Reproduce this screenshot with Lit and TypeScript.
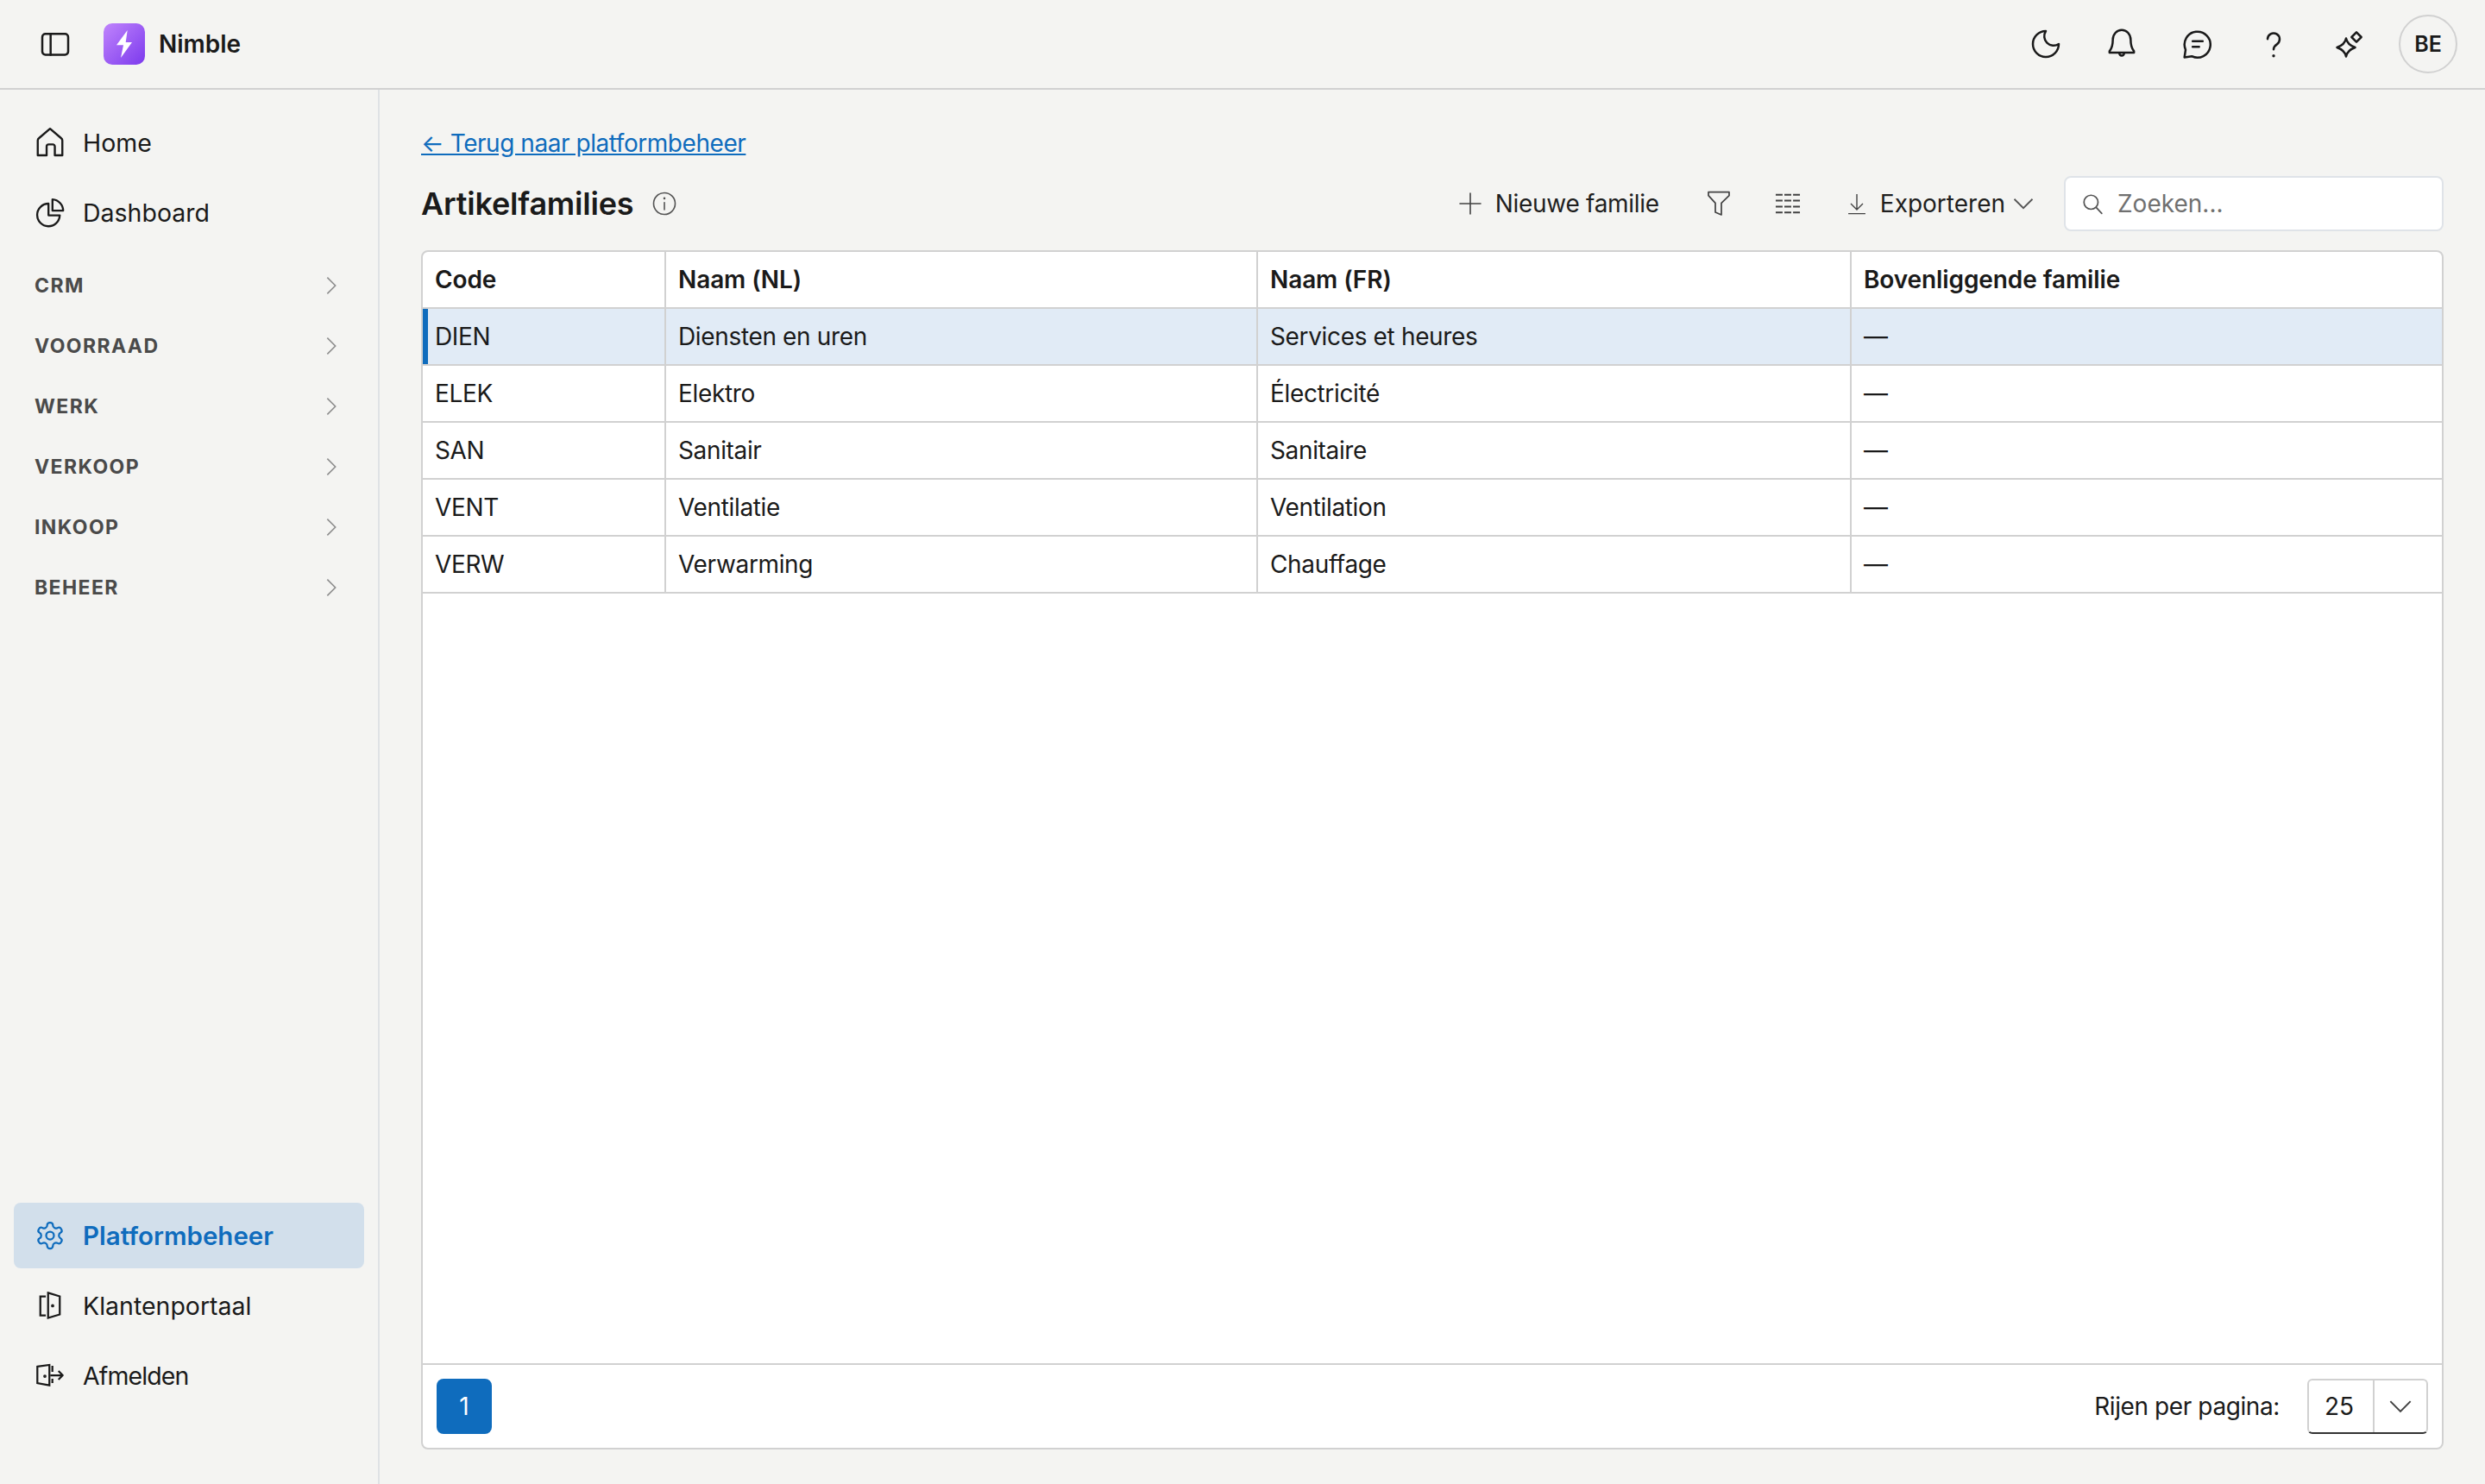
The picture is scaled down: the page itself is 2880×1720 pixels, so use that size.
import { LitElement, html, svg, css } from "lit";
import { customElement } from "lit/decorators.js";

const ic = (size: number, sw: number, body: unknown) => html`<svg class="ic" style="width:${size}px;height:${size}px" viewBox="0 0 24 24" fill="none" stroke="currentColor" stroke-width="${sw}" stroke-linecap="round" stroke-linejoin="round">${body}</svg>`;

const chevron = (cls: string) => html`<svg class=${cls} viewBox="0 0 24 24" fill="none" stroke="currentColor" stroke-width="1.2"><path d="M5 8.5l7 7 7-7"/></svg>`;

const icons = {
  panel: svg`<rect x="3" y="5" width="18" height="14.5" rx="2.2"/><path d="M8.8 5v14.5"/>`,
  home: svg`<path d="M3 21.500V10.600c0-.6.3-1.200.8-1.600L12 2l8.200 7c.5.4.8 1 .8 1.600v10.900h-5.500v-6.500a1.500 1.500 0 0 0-1.500-1.500h-3a1.500 1.500 0 0 0-1.500 1.500v6.500z"/>`,
  pie: svg`<path d="M10.500 5.200A8.500 8.500 0 1 0 19 14h-8.500z"/><path d="M13.500 2a8.500 8.500 0 0 1 8 8.500h-8z"/>`,
  gear: svg`<path d="M12.220 2h-.44a2 2 0 0 0-2 2v.18a2 2 0 0 1-1 1.730l-.43.25a2 2 0 0 1-2 0l-.15-.08a2 2 0 0 0-2.730.73l-.22.38a2 2 0 0 0 .73 2.730l.15.1a2 2 0 0 1 1 1.720v.51a2 2 0 0 1-1 1.740l-.15.09a2 2 0 0 0-.73 2.730l.22.38a2 2 0 0 0 2.730.73l.15-.08a2 2 0 0 1 2 0l.43.25a2 2 0 0 1 1 1.730V20a2 2 0 0 0 2 2h.44a2 2 0 0 0 2-2v-.18a2 2 0 0 1 1-1.730l.43-.25a2 2 0 0 1 2 0l.15.08a2 2 0 0 0 2.730-.73l.22-.39a2 2 0 0 0-.73-2.730l-.15-.08a2 2 0 0 1-1-1.740v-.5a2 2 0 0 1 1-1.740l.15-.09a2 2 0 0 0 .73-2.730l-.22-.38a2 2 0 0 0-2.730-.73l-.15.08a2 2 0 0 1-2 0l-.43-.25a2 2 0 0 1-1-1.730V4a2 2 0 0 0-2-2z"/><circle cx="12" cy="12" r="3"/>`,
  door: svg`<path d="M8.700 5H4.500v14.700h4.200" stroke-linecap="butt" stroke-linejoin="miter"/><path d="M10.500 2.300l9 2.700v14l-9 2.700z" stroke-linejoin="miter"/><circle cx="14" cy="12.300" r=".5" fill="currentColor"/>`,
  logout: svg`<path d="M2.200 5.300L11.500 4v15.700L2.200 18z" stroke-linejoin="miter"/><path d="M13.800 4.700v4.600M13.800 14.700V18" stroke-linecap="butt"/><path d="M12.200 12h9.600M18.500 8.700l3.300 3.300-3.300 3.300" stroke-linecap="butt"/><circle cx="8" cy="12.700" r=".5" fill="currentColor"/>`,
  moon: svg`<path d="M12 3a6.500 6.500 0 0 0 9 9 9 9 0 1 1-9-9Z"/>`,
  bell: svg`<path d="M5.800 9a6.200 6.800 0 0 1 12.400 0c0 4.500.8 6.200 2.300 8v1h-17v-1c1.500-1.800 2.300-3.500 2.300-8Z"/><path d="M10.300 18.200a1.700 1.900 0 0 0 3.400 0"/>`,
  chat: svg`<path d="M7.900 20.500A9 9 0 1 0 3.600 16L2.800 21.300Z"/><path d="M8.500 10h7M8.500 14h4.500"/>`,
  help: svg`<path d="M7.800 8.500a4.200 4.200 0 1 1 6.500 3.700c-1.400.9-2.300 1.800-2.300 3.600"/><path d="M12 20.200v.1" stroke-width="2"/>`,
  sparkle: svg`<path d="M9.600 8.100c.6 3.100 2.400 4.900 6.300 6.300-3.900 1.400-5.700 3.200-6.300 6.300-.6-3.100-2.400-4.900-6.300-6.300 3.900-1.400 5.700-3.200 6.300-6.300Z"/><path d="M16.800 3.800l3.400 3.400-3.400 3.400-3.400-3.400z"/>`,
  plus: svg`<path d="M12 3v18M3 12h18"/>`,
  filter: svg`<path d="M3 2h18v3l-6.750 6.500v10.250L9 19.500v-8L3 5z" stroke-linejoin="round" stroke-linecap="butt"/>`,
  grid: svg`<path stroke-dasharray="5.600 1.500" stroke-linecap="butt" d="M2.100 4.800h19.800M2.100 9.600h19.800M2.100 14.400h19.800M2.100 19.200h19.800"/>`,
  down: svg`<path d="M12 2.500v15.500M6 12l6 6 6-6M3.500 22h17" stroke-linecap="butt" stroke-linejoin="miter"/>`,
  search: svg`<circle cx="10.500" cy="10.500" r="7.500"/><path d="M16 16l6 6.500"/>`,
  info: svg`<circle cx="12" cy="12" r="10"/><path d="M12 11v6.500" /><path d="M12 7v.2" stroke-width="2"/>`,
};

const sections = ["CRM", "VOORRAAD", "WERK", "VERKOOP", "INKOOP", "BEHEER"];
const rows = [
  ["DIEN", "Diensten en uren", "Services et heures", "—"],
  ["ELEK", "Elektro", "Électricité", "—"],
  ["SAN", "Sanitair", "Sanitaire", "—"],
  ["VENT", "Ventilatie", "Ventilation", "—"],
  ["VERW", "Verwarming", "Chauffage", "—"],
];
const heads = ["Code", "Naam (NL)", "Naam (FR)", "Bovenliggende familie"];

@customElement("app-root")
export class AppRoot extends LitElement {
  static styles = css`
    :host { display: block; width: 2880px; height: 1720px; overflow: hidden; background: #f4f4f2; color: #1a1a1a; font-family: Inter, "Liberation Sans", sans-serif; font-size: 28px; }
    * { box-sizing: border-box; }
    .ic { display: block; flex: none; }
    .page { display: flex; flex-direction: column; height: 100%; }
    header { height: 104px; flex: none; display: flex; align-items: center; border-bottom: 2px solid #d1d1d1; padding: 0 32px 0 44px; }
    .brand { display: flex; align-items: center; margin-left: 36px; gap: 16px; font-weight: 600; }
    .logo { width: 48px; height: 48px; border-radius: 10px; background: linear-gradient(135deg, #c084fc, #7c3aed); }
    .logo svg { display: block; }
    .tools { margin-left: auto; display: flex; align-items: center; }
    .tool { width: 88px; display: flex; justify-content: center; }
    .avatar { width: 68px; height: 68px; margin-left: 13px; border: 2px solid #d1d1d1; border-radius: 50%; display: flex; align-items: center; justify-content: center; font-size: 25px; font-weight: 600; }
    .body { flex: 1; display: flex; min-height: 0; }
    aside { width: 440px; flex: none; border-right: 2px solid #dfe2e5; padding: 23px 16px 83px; display: flex; flex-direction: column; }
    .item { height: 76px; display: flex; align-items: center; gap: 22px; padding-left: 26px; margin-bottom: 5px; border-radius: 8px; font-size: 28.5px; }
    .slot { width: 32px; display: flex; justify-content: center; flex: none; }
    .item.active { background: #d2dfeb; color: #0f6cbd; font-weight: 600; font-size: 29.5px; }
    .tight { letter-spacing: -0.9px; }
    .sec { height: 70px; display: flex; align-items: center; justify-content: space-between; padding: 0 22px 0 24px; font-size: 23px; font-weight: 700; letter-spacing: 1.4px; color: #4a4a4a; }
    .sections { margin-top: 7px; }
    .sec svg { width: 32px; height: 32px; transform: rotate(-90deg); color: #8e8e8e; }
    .spacer { flex: 1; }
    main { flex: 1; min-width: 0; display: flex; flex-direction: column; padding: 42px 48px 40px 48px; }
    .back { color: #0f6cbd; text-decoration: underline; line-height: 40px; align-self: flex-start; letter-spacing: -0.45px; }
    .bar { display: flex; align-items: center; height: 64px; margin-top: 18px; margin-bottom: 22px; }
    h1 { margin: 0; font-size: 36px; font-weight: 600; letter-spacing: -0.2px; }
    .bar .info { margin-left: 21px; color: #555; }
    .acts { margin-left: auto; display: flex; align-items: center; }
    .act { display: flex; align-items: center; color: #424242; }
    .act span { color: #1f1f1f; }
    .a-new { gap: 13px; }
    .a-new span { letter-spacing: -0.3px; }
    .a-filter { margin-left: 53px; }
    .a-grid { margin-left: 47px; }
    .a-exp { margin-left: 49px; gap: 13px; }
    .search { width: 440px; height: 64px; background: #fff; border: 2px solid #dfe3e8; border-radius: 8px; display: flex; align-items: center; gap: 16px; padding-left: 18px; color: #707070; margin-left: 29px; }
    .search .ic { color: #555; }
    .table { flex: 1; min-height: 0; background: #fff; border: 2px solid #d1d1d1; border-radius: 8px; display: flex; flex-direction: column; }
    .grid { flex: 1; }
    .row { display: grid; grid-template-columns: 282px 686px 688px 1fr; height: 66px; border-bottom: 2px solid #d1d1d1; letter-spacing: -0.35px; }
    .row > div { padding-left: 14px; display: flex; align-items: center; border-right: 2px solid #d1d1d1; }
    .row > div:last-child { border-right: 0; }
    .row.head { font-weight: 600; letter-spacing: -0.1px; }
    .row.sel { background: #e1ebf6; box-shadow: inset 6px 0 0 #0f6cbd; }
    .foot { height: 98px; flex: none; border-top: 2px solid #d1d1d1; display: flex; align-items: center; padding: 0 16px; }
    .page1 { width: 64px; height: 64px; background: #0f6cbd; color: #fff; border-radius: 8px; display: flex; align-items: center; justify-content: center; }
    .rpp { margin-left: auto; margin-right: 32px; letter-spacing: -0.4px; }
    .sel-box { width: 140px; height: 64px; display: flex; border: 2px solid #d1d1d1; border-bottom: 2px solid #333; border-radius: 6px; }
    .sel-val { width: 76px; border-right: 2px solid #d1d1d1; display: flex; align-items: center; justify-content: center; padding-right: 4px; }
    .sel-ch { flex: 1; display: flex; align-items: center; justify-content: center; color: #424242; }
    .sel-ch svg { width: 40px; height: 40px; }
    .exp-ch { width: 36px; height: 36px; margin-left: -10px; color: #555; }
  `;

  render() {
    return html`<div class="page">
      <header>
        ${ic(40, 1.5, icons.panel)}
        <div class="brand">
          <div class="logo"><svg width="48" height="48" viewBox="0 0 48 48" fill="#fff"><path d="M27.700 8L15 25.300H23L20 40 33 22H25.700Z"/></svg></div>
          <span>Nimble</span>
        </div>
        <div class="tools">
          ${[icons.moon, icons.bell, icons.chat, icons.help, icons.sparkle].map((i) => html`<div class="tool">${ic(40, 1.5, i)}</div>`)}
          <div class="avatar">BE</div>
        </div>
      </header>
      <div class="body">
        <aside>
          <div class="item"><div class="slot">${ic(38, 1.5, icons.home)}</div><span>Home</span></div>
          <div class="item"><div class="slot">${ic(37, 1.5, icons.pie)}</div><span>Dashboard</span></div>
          <div class="sections">
            ${sections.map((s) => html`<div class="sec"><span>${s}</span>${chevron("")}</div>`)}
          </div>
          <div class="spacer"></div>
          <div class="item active"><div class="slot">${ic(36, 1.5, icons.gear)}</div><span>Platformbeheer</span></div>
          <div class="item"><div class="slot">${ic(36, 1.5, icons.door)}</div><span>Klantenportaal</span></div>
          <div class="item"><div class="slot">${ic(36, 1.5, icons.logout)}</div><span class="tight">Afmelden</span></div>
        </aside>
        <main>
          <a class="back">← Terug naar platformbeheer</a>
          <div class="bar">
            <h1>Artikelfamilies</h1>
            <div class="info">${ic(30, 1.3, icons.info)}</div>
            <div class="acts">
              <div class="act a-new">${ic(32, 1.2, icons.plus)}<span>Nieuwe familie</span></div>
              <div class="act a-filter">${ic(32, 1.3, icons.filter)}</div>
              <div class="act a-grid">${ic(34, 1.4, icons.grid)}</div>
              <div class="act a-exp">${ic(28, 1.2, icons.down)}<span>Exporteren</span>${chevron("exp-ch")}</div>
              <div class="search">${ic(26, 1.6, icons.search)}<span>Zoeken...</span></div>
            </div>
          </div>
          <div class="table">
            <div class="grid">
              <div class="row head">${heads.map((h) => html`<div>${h}</div>`)}</div>
              ${rows.map((r, i) => html`<div class="row ${i === 0 ? "sel" : ""}">${r.map((c) => html`<div>${c}</div>`)}</div>`)}
            </div>
            <div class="foot">
              <div class="page1">1</div>
              <span class="rpp">Rijen per pagina:</span>
              <div class="sel-box"><div class="sel-val">25</div><div class="sel-ch">${chevron("")}</div></div>
            </div>
          </div>
        </main>
      </div>
    </div>`;
  }
}
